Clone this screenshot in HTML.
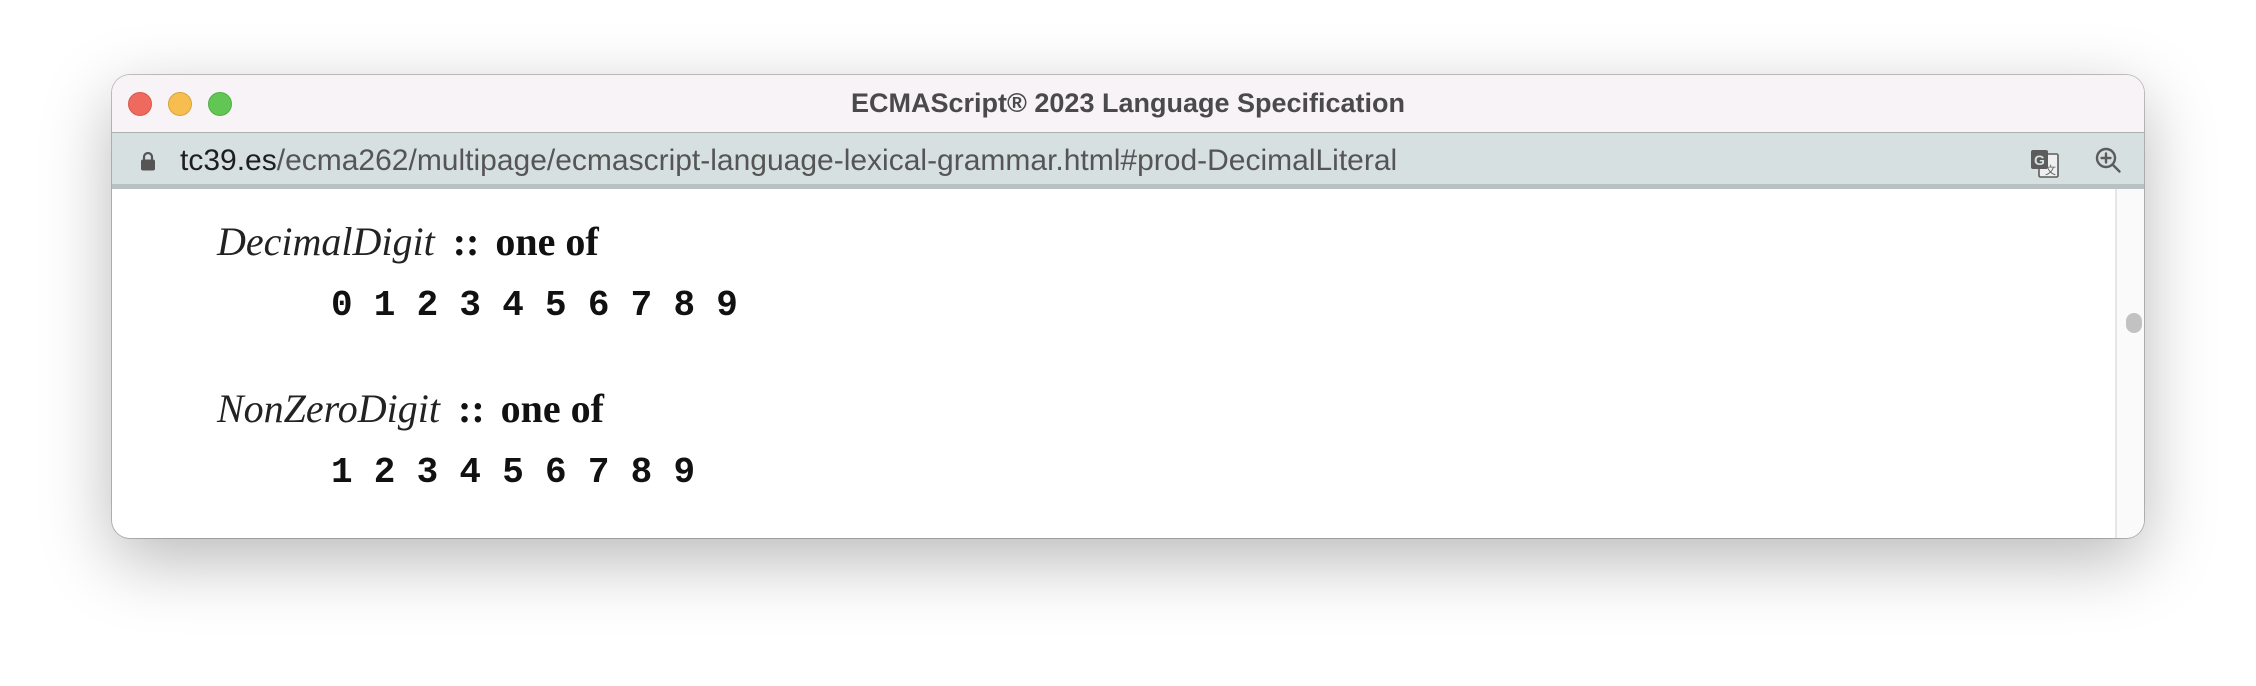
<!DOCTYPE html>
<html><head><meta charset="utf-8"><style>
html,body{margin:0;padding:0;background:#fff;width:2256px;height:686px;overflow:hidden;position:relative}
.win{position:absolute;left:112px;top:75px;width:2032px;height:463px;border-radius:18px;overflow:hidden;background:#fff;box-shadow:0 22px 70px rgba(0,0,0,.28),0 0 0 1px rgba(0,0,0,.22)}
.title{position:absolute;left:0;top:0;width:100%;height:57px;background:#f7f3f7;border-bottom:1px solid #a9b0b0}
.dot{position:absolute;top:17px;width:24px;height:24px;border-radius:50%}
.ttl{position:absolute;left:0;right:0;top:13px;text-align:center;font:bold 27px "Liberation Sans",sans-serif;color:#4a4a4a}
.bar{position:absolute;left:0;top:58px;width:100%;height:51px;background:#d7e0e1;border-bottom:5px solid #b8c2c2}
.url{position:absolute;left:68px;top:11px;font:30px "Liberation Sans",sans-serif;color:#555;white-space:nowrap}
.url b{font-weight:normal;color:#1e1e1e}
.sb{position:absolute;left:2003px;top:114px;width:29px;height:349px;background:#fafafa;border-left:2px solid #e6e6e6}
.thumb{position:absolute;left:9px;top:124px;width:16px;height:20px;border-radius:8px;background:#c2c2c2}
.nt{position:absolute;left:105px;font:italic 40px "Liberation Serif",serif;color:#222;white-space:nowrap}
.nt b{font-style:normal;color:#111}
.dg{position:absolute;left:219px;font:bold 36px "Liberation Mono",monospace;letter-spacing:-0.2px;color:#111;white-space:pre}
</style></head><body>
<div class="win">
 <div class="title">
  <div class="dot" style="left:16px;background:#ee6a5f;border:1px solid #d8574c;width:22px;height:22px"></div>
  <div class="dot" style="left:56px;background:#f5be4f;border:1px solid #d9a33d;width:22px;height:22px"></div>
  <div class="dot" style="left:96px;background:#62c655;border:1px solid #4fae43;width:22px;height:22px"></div>
  <div class="ttl">ECMAScript® 2023 Language Specification</div>
 </div>
 <div class="bar">
  <svg style="position:absolute;left:28px;top:17px" width="16" height="22" viewBox="0 0 16 22"><path d="M4 10V7a4 4 0 0 1 8 0v3" fill="none" stroke="#555" stroke-width="2.2"/><rect x="1" y="9.5" width="14" height="11" rx="2" fill="#555"/></svg>
  <div class="url"><b>tc39.es</b>/ecma262/multipage/ecmascript-language-lexical-grammar.html#prod-DecimalLiteral</div>
  <svg style="position:absolute;left:1918px;top:17px" width="30" height="28" viewBox="0 0 30 28"><rect x="9" y="4" width="19" height="23" rx="1.5" fill="#eef0f0" stroke="#5c5c5c" stroke-width="1.6"/><rect x="1" y="0" width="17" height="19" rx="2" fill="#5c5c5c"/><text x="4" y="15" font-family="Liberation Sans" font-weight="bold" font-size="14" fill="#d7e0e1">G</text><text x="15" y="24" font-family="Noto Sans CJK SC,sans-serif" font-size="11" fill="#5c5c5c">文</text></svg>
  <svg style="position:absolute;left:1982px;top:13px" width="30" height="30" viewBox="0 0 30 30"><circle cx="12" cy="12" r="9" fill="none" stroke="#5c5c5c" stroke-width="2.4"/><path d="M12 7.5v9M7.5 12h9M18.5 18.5l7 7" stroke="#5c5c5c" stroke-width="2.4" stroke-linecap="round"/></svg>
 </div>
 <div class="sb"><div class="thumb"></div></div>
 <div class="nt" style="top:140px;line-height:54px;height:54px">DecimalDigit <b style="margin-left:8px">::</b> <b style="margin-left:6px">one of</b></div>
 <div class="dg" style="top:210px">0 1 2 3 4 5 6 7 8 9</div>
 <div class="nt" style="top:307px;line-height:54px;height:54px">NonZeroDigit <b style="margin-left:8px">::</b> <b style="margin-left:6px">one of</b></div>
 <div class="dg" style="top:377px">1 2 3 4 5 6 7 8 9</div>
</div>
</body></html>
